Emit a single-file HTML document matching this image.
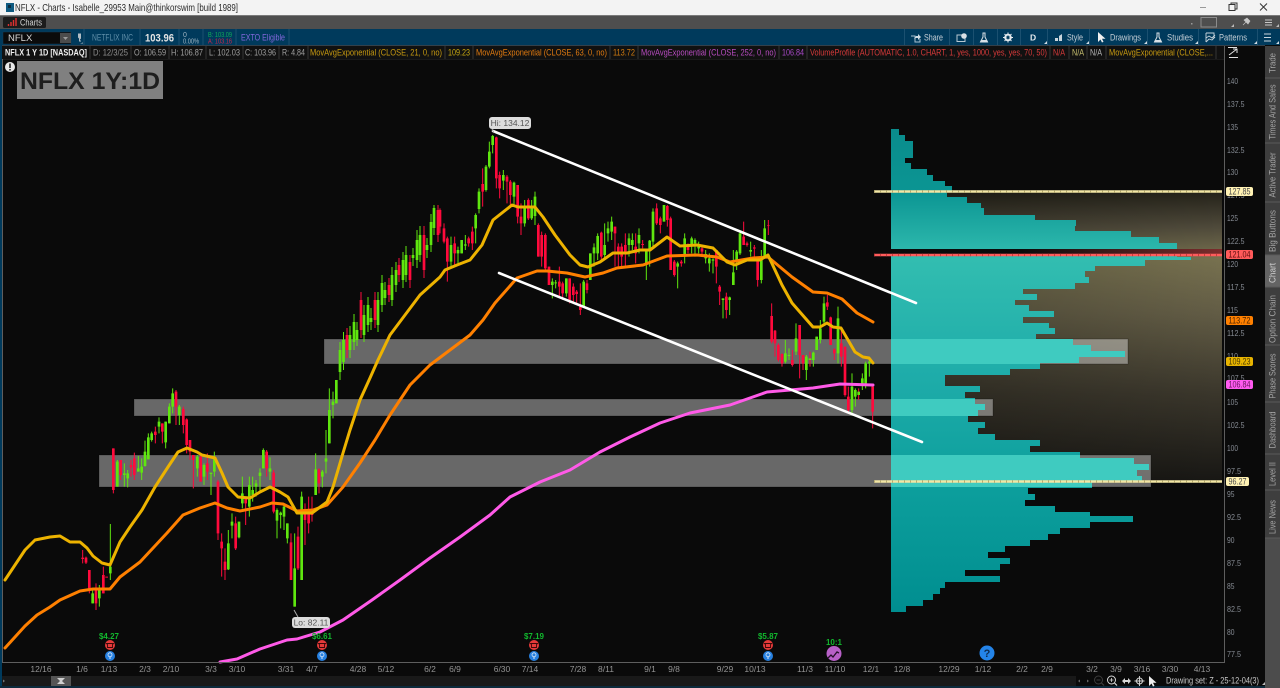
<!DOCTYPE html>
<html>
<head>
<meta charset="utf-8">
<title>NFLX - Charts</title>
<style>
html,body{margin:0;padding:0;background:#0a0a0a;width:1280px;height:688px;overflow:hidden}
svg{display:block}
text{font-family:"Liberation Sans",sans-serif}
.ax{font-size:8.6px;fill:#858a92}
.dt{font-size:8.5px;fill:#949494;text-anchor:middle}
.st{font-size:9.4px}
.tb{font-size:9.6px;fill:#c4ced6}
.tab{font-size:9.4px;fill:#a4a4a4;text-anchor:middle}
.ev{font-size:8px;fill:#12b82e;text-anchor:middle;font-weight:bold}
.bd{font-size:8.8px;fill:#4a4a4a}
</style>
</head>
<body>
<svg width="1280" height="688" viewBox="0 0 1280 688" xmlns="http://www.w3.org/2000/svg">
<defs>
<linearGradient id="vp" gradientUnits="userSpaceOnUse" x1="0" y1="129" x2="0" y2="612">
<stop offset="0" stop-color="#0a8c8c"/><stop offset=".13" stop-color="#0b9593"/><stop offset=".27" stop-color="#32bdb0"/><stop offset=".5" stop-color="#1fadaa"/><stop offset=".75" stop-color="#0c9e9c"/><stop offset="1" stop-color="#008e90"/>
</linearGradient>
<linearGradient id="tan" gradientUnits="userSpaceOnUse" x1="0" y1="192" x2="0" y2="481">
<stop offset="0" stop-color="#242219"/><stop offset=".12" stop-color="#4e493a"/><stop offset=".23" stop-color="#77714f"/><stop offset=".42" stop-color="#625c45"/><stop offset=".7" stop-color="#3a362b"/><stop offset="1" stop-color="#181714"/>
</linearGradient>
<linearGradient id="tanl" gradientUnits="userSpaceOnUse" x1="891" y1="0" x2="1222" y2="0">
<stop offset="0" stop-color="#000" stop-opacity=".25"/><stop offset="1" stop-color="#000" stop-opacity="0"/>
</linearGradient>
<linearGradient id="band" gradientUnits="userSpaceOnUse" x1="1020" y1="0" x2="1222" y2="0">
<stop offset="0" stop-color="#0a0a0a"/><stop offset="1" stop-color="#7c2c2c"/>
</linearGradient>
<clipPath id="pc"><path d="M891 129H899V135H905V141H913V158H905V163H911V169H927V175H933V181H945V186H952V192H947V197H967V203H981V208H984V215H1035V220H1076V226H1075V231H1131V237H1159V243H1177V257H1191V260H1145V266H1095V271H1085V277H1089V283H1075V289H1023V294H1037V300H1015V305H1029V311H1054V317H1023V323H1049V328H1055V334H1036V339H1073V345H1091V351H1125V357H1079V363H1040V369H1010V375H945V386H980V392H965V398H975V404H985V410H978V416H968V422H985V428H978V434H995V440H1040V446H1030V452H1080V458H1134V464H1149V470H1137V476H1142V482H1092V488H1028V494H1035V500H1025V506H1055V512H1090V516H1133V522H1090V528H1060V534H1048V540H1030V546H1005V552H988V558H1010V564H1000V570H965V576H1000V582H945V588H940V594H933V600H923V606H906V612H891Z"/></clipPath>
</defs>

<!-- base -->
<rect width="1280" height="688" fill="#0a0a0a"/>
<rect x="0" y="0" width="1280" height="15" fill="#f3f3f3"/>
<rect x="0" y="15" width="1280" height="14" fill="#4e4e4e"/>
<rect x="0" y="15" width="1280" height="1" fill="#7a7a7a"/>
<rect x="0" y="29" width="1280" height="16" fill="#003a5c"/>
<rect x="0" y="45" width="2" height="643" fill="#003a5c"/>

<!-- title bar -->
<rect x="6" y="3" width="8" height="9" fill="#0f5a80"/>
<rect x="8" y="5" width="3" height="3" fill="#0c2c40"/>
<text x="15" y="11" font-size="10.400" fill="#2a2a2a" textLength="223" lengthAdjust="spacingAndGlyphs">NFLX - Charts - Isabelle_29953 Main@thinkorswim [build 1989]</text>
<path d="M1200 7.500H1206" stroke="#999" stroke-width="1"/>
<path d="M1229 4.500h6v6h-6zM1231 4.500v-1.500h6v6h-2" fill="none" stroke="#333" stroke-width="1"/>
<path d="M1260 3.500l7 7M1267 3.500l-7 7" stroke="#333" stroke-width="1"/>

<!-- tabs row -->
<rect x="3" y="17" width="43" height="11" rx="1.500" fill="#1c1c1c"/>
<path d="M8.500 26v-2M11 26v-4M13.500 26v-6M16 26v-8" stroke="#e03030" stroke-width="1.400"/>
<text x="20" y="25.500" font-size="9.600" fill="#d6d6d6" textLength="22" lengthAdjust="spacingAndGlyphs">Charts</text>
<rect x="1191" y="23" width="1.500" height="1.500" fill="#999"/>
<rect x="1201" y="17.500" width="15.500" height="9.500" fill="none" stroke="#8c8c8c" stroke-width="1"/>
<path d="M1243 25l3-3M1244 20l4 4 2-3-3-3z" fill="#c8c8c8" stroke="#c8c8c8" stroke-width=".6"/>
<path d="M1265 20h7M1265 22.500h7M1265 25h7" stroke="#c8c8c8" stroke-width="1"/>
<path d="M1231 27h3v-3zM1276 27h3v-3zM1225 27h1" fill="#bbb"/>

<!-- blue toolbar left -->
<rect x="3" y="32" width="68" height="12" fill="#0b0b0b" stroke="#1a3a50" stroke-width=".5"/>
<text x="8" y="41" font-size="9.500" fill="#d8d8d8">NFLX</text>
<rect x="60" y="33" width="11" height="10" fill="#4c4c4c"/>
<path d="M63 37h5l-2.500 3z" fill="#9a9a9a"/>
<path d="M78 33.500h3v5l-1 1v1h1v1h-2v-3l-1-1zM80 43.500h3v-1z" fill="#b0bcc4"/>
<text x="92" y="40.500" font-size="9.600" fill="#5f8ea8" textLength="41" lengthAdjust="spacingAndGlyphs">NETFLIX INC</text>
<text x="145" y="41.500" font-size="11" font-weight="bold" fill="#e4e4e4" textLength="29" lengthAdjust="spacingAndGlyphs">103.96</text>
<text x="183" y="37" font-size="7" fill="#9db3c1">0</text>
<text x="183" y="43.500" font-size="7" fill="#9db3c1" textLength="16" lengthAdjust="spacingAndGlyphs">0.00%</text>
<text x="208" y="37" font-size="7" fill="#0fa85a" textLength="24" lengthAdjust="spacingAndGlyphs">B: 103.09</text>
<text x="208" y="43.500" font-size="7" fill="#c8284a" textLength="24" lengthAdjust="spacingAndGlyphs">A: 103.16</text>
<text x="241" y="40.500" font-size="9.600" fill="#8268dc" textLength="44" lengthAdjust="spacingAndGlyphs">EXTO Eligible</text>
<path d="M84 29V45M140 29V45M179 29V45M203 29V45M236 29V45M289 29V45" stroke="#1b5070" stroke-width="1"/>

<!-- blue toolbar right -->
<path d="M904.500 29V45M949.500 29V45M973.500 29V45M997.500 29V45M1020.500 29V45M1047.500 29V45M1089.500 29V45M1147.500 29V45M1198.500 29V45M1257.500 29V45" stroke="#1b5070" stroke-width="1"/>
<path d="M911 36h4v6h5v-3" fill="none" stroke="#a8c0cf" stroke-width="1"/><path d="M914 39l2-3h2v-2l3 3-3 3v-2h-2z" fill="#cfdbe3"/>
<text x="924" y="40.500" class="tb" textLength="19" lengthAdjust="spacingAndGlyphs">Share</text>
<rect x="957" y="35" width="8" height="6.500" fill="none" stroke="#b8c8d2" stroke-width="1"/><circle cx="964" cy="36" r="2.800" fill="#d8e0e6"/>
<path d="M982.500 33h3M983 33v4l-2.500 5h7l-2.500-5v-4" fill="none" stroke="#d8e0e6" stroke-width="1"/><path d="M981 40h6l1 2h-8z" fill="#d8e0e6"/>
<circle cx="1008" cy="37.500" r="3" fill="none" stroke="#e4eaee" stroke-width="1.600"/><path d="M1008 32.500v10M1003 37.500h10M1004.500 34l7 7M1011.500 34l-7 7" stroke="#e4eaee" stroke-width="1"/><circle cx="1008" cy="37.500" r="1.500" fill="#003a5c"/>
<text x="1030" y="40.500" font-size="8.500" font-weight="bold" fill="#e4eaee">D</text>
<path d="M1055 38h3v3h-3zM1059 36l3-2v7h-3z" fill="#c8d4dc"/>
<text x="1067" y="40.500" class="tb" textLength="16" lengthAdjust="spacingAndGlyphs">Style</text>
<path d="M1098 32v10l2.500-2.500 1.500 3 1.500-.700-1.500-3h3.500z" fill="#f0f0f0"/>
<text x="1110" y="40.500" class="tb" textLength="31" lengthAdjust="spacingAndGlyphs">Drawings</text>
<path d="M1156.500 33h3M1157 33v4l-2.500 5h7l-2.500-5v-4" fill="none" stroke="#d8e0e6" stroke-width="1"/><path d="M1155 40h6l1 2h-8z" fill="#d8e0e6"/>
<text x="1167" y="40.500" class="tb" textLength="26" lengthAdjust="spacingAndGlyphs">Studies</text>
<path d="M1206 33h8v5M1206 33v9M1206 38l3-2 3 2 3-3M1206 42l3-3 3 1 3-3" fill="none" stroke="#c8d4dc" stroke-width=".9"/>
<text x="1219" y="40.500" class="tb" textLength="28" lengthAdjust="spacingAndGlyphs">Patterns</text>
<path d="M1264 34h7M1264 37.500h7M1264 41h7" stroke="#c8d4dc" stroke-width="1"/>
<path d="M1044 44h3v-3zM1086 44h3v-3zM1144 44h3v-3zM1195 44h3v-3zM1254 44h3v-3zM1276 44h3v-3z" fill="#cfdbe3"/>

<!-- status row -->
<rect x="2" y="45" width="1222" height="14.500" fill="#111111"/>
<rect x="2" y="45" width="1263" height="1" fill="#33404a"/>
<rect x="2" y="59" width="1222" height=".8" fill="#1f1f1f"/>
<path d="M90 46V59M131 46V59M169 46V59M206 46V59M243 46V59M279 46V59M308 46V59M445 46V59M473 46V59M610 46V59M638 46V59M779 46V59M807 46V59M1050 46V59M1069 46V59M1087 46V59M1106 46V59M1216 46V59" stroke="#3a3a3a" stroke-width=".9"/>
<text x="5" y="55.500" class="st" font-weight="bold" fill="#f0f0f0" textLength="82" lengthAdjust="spacingAndGlyphs">NFLX 1 Y 1D [NASDAQ]</text>
<text x="93" y="55.500" class="st" fill="#8e8e8e" textLength="35" lengthAdjust="spacingAndGlyphs">D: 12/3/25</text>
<text x="134" y="55.500" class="st" fill="#a0a0a0" textLength="32" lengthAdjust="spacingAndGlyphs">O: 106.59</text>
<text x="171" y="55.500" class="st" fill="#a0a0a0" textLength="32" lengthAdjust="spacingAndGlyphs">H: 106.87</text>
<text x="209" y="55.500" class="st" fill="#a0a0a0" textLength="31" lengthAdjust="spacingAndGlyphs">L: 102.03</text>
<text x="245" y="55.500" class="st" fill="#a0a0a0" textLength="31" lengthAdjust="spacingAndGlyphs">C: 103.96</text>
<text x="282" y="55.500" class="st" fill="#a0a0a0" textLength="23" lengthAdjust="spacingAndGlyphs">R: 4.84</text>
<text x="310" y="55.500" class="st" fill="#c89a10" textLength="132" lengthAdjust="spacingAndGlyphs">MovAvgExponential (CLOSE, 21, 0, no)</text>
<text x="448" y="55.500" class="st" fill="#c8a810" textLength="22" lengthAdjust="spacingAndGlyphs">109.23</text>
<text x="476" y="55.500" class="st" fill="#e07a10" textLength="131" lengthAdjust="spacingAndGlyphs">MovAvgExponential (CLOSE, 63, 0, no)</text>
<text x="613" y="55.500" class="st" fill="#d07a10" textLength="22" lengthAdjust="spacingAndGlyphs">113.72</text>
<text x="641" y="55.500" class="st" fill="#b84cc0" textLength="135" lengthAdjust="spacingAndGlyphs">MovAvgExponential (CLOSE, 252, 0, no)</text>
<text x="782" y="55.500" class="st" fill="#a848c8" textLength="22" lengthAdjust="spacingAndGlyphs">106.84</text>
<text x="810" y="55.500" class="st" fill="#d83a3a" textLength="237" lengthAdjust="spacingAndGlyphs">VolumeProfile (AUTOMATIC, 1.0, CHART, 1, yes, 1000, yes, yes, 70, 50)</text>
<text x="1053" y="55.500" class="st" fill="#d83a3a" textLength="12" lengthAdjust="spacingAndGlyphs">N/A</text>
<text x="1072" y="55.500" class="st" fill="#c8c070" textLength="12" lengthAdjust="spacingAndGlyphs">N/A</text>
<text x="1090" y="55.500" class="st" fill="#b8b8b8" textLength="12" lengthAdjust="spacingAndGlyphs">N/A</text>
<text x="1109" y="55.500" class="st" fill="#c89a10" textLength="104" lengthAdjust="spacingAndGlyphs">MovAvgExponential (CLOSE,...</text>

<!-- value area and profile -->
<rect x="891" y="192" width="331" height="289" fill="url(#tan)"/>
<rect x="891" y="192" width="331" height="289" fill="url(#tanl)"/>
<rect x="134" y="399" width="859" height="17" fill="#fff" fill-opacity=".385"/>
<rect x="324" y="339" width="804" height="25" fill="#fff" fill-opacity=".385"/>
<rect x="99" y="455" width="1052" height="32" fill="#fff" fill-opacity=".385"/>
<rect x="134" y="399" width="859" height="17" fill="none" stroke="#000" stroke-opacity=".25"/>
<rect x="324" y="339" width="804" height="25" fill="none" stroke="#000" stroke-opacity=".25"/>
<rect x="99" y="455" width="1052" height="32" fill="none" stroke="#000" stroke-opacity=".25"/>
<rect x="891" y="129" width="331" height="483" fill="url(#vp)" clip-path="url(#pc)"/>
<g clip-path="url(#pc)" fill="#3fcbc0">
<rect x="891" y="339" width="237" height="25"/><rect x="891" y="399" width="102" height="17"/><rect x="891" y="455" width="260" height="32"/>
</g>

<!-- levels -->
<rect x="891" y="249" width="331" height="5" fill="url(#band)"/>
<path d="M874 191.500H1222M874 481.500H1222" stroke="#f2e6a4" stroke-width="2.600"/>
<path d="M874 191.500H1222M874 481.500H1222" stroke="#b8ac70" stroke-width="2.600" stroke-dasharray="1 5"/>
<path d="M874 255H1222" stroke="#ff5c5c" stroke-width="2.600"/>
<path d="M874 255H1222" stroke="#c83c3c" stroke-width="2.600" stroke-dasharray="1 5"/>

<!-- candles: first section -->
<g transform="translate(80 380) scale(.33333)" fill="none">
<path stroke="#ff0a3c" stroke-width="3" d="M8 510V550M18 530V552M28 570V640M48 610V690M70 560V640M100 205V340M122 240V300M153 240V290M163 218V300M226 140V190M247 130V190M288 30V135M310 80V160M320 115V220M330 180V240M340 225V325M362 225V305M382 220V300M414 300V480M425 460V590M435 505V600M467 410V510M497 350V435M560 210V290M581 270V400M633 460V600M654 440V570M675 370V495M686 350V460M696 350V425M717 265V340"/>
<path stroke="#ff0a3c" stroke-width="8" d="M8 533V537M18 533V548M28 570V625M48 625V670M70 585V640M80 590V593M100 205V330M122 240V285M153 255V262M163 235V285M226 155V165M247 130V155M288 35V80M310 87V135M320 118V195M330 180V215M340 225V240M362 230V305M382 250V275M414 305V460M425 485V505M435 545V570M467 430V505M497 350V370M560 215V265M581 278V395M633 487V600M654 470V565M675 390V420M686 395V430M696 395V405M717 268V310"/>
<path stroke="#5fe60f" stroke-width="3" d="M38 630V670M58 615V680M91 432V600M112 240V320M133 250V320M143 270V322M175 228V275M185 235V300M195 182V260M205 160V238M215 155V185M237 112V160M257 125V205M268 70V130M278 25V100M298 75V135M352 225V290M372 250V315M393 280V345M403 215V290M445 450V570M456 400V475M477 425V475M487 290V385M508 290V410M518 290V365M528 300V350M540 265V340M550 205V265M570 232V300M591 385V475M602 395V445M612 375V450M622 430V490M644 460V680M665 335V600M707 220V345M727 270V322M738 150V280M748 25V190M759 35V115M769 0V70"/>
<path stroke="#5fe60f" stroke-width="8" d="M38 640V670M58 625V655M91 560V580M112 245V320M133 280V285M143 280V295M175 265V275M185 260V278M195 215V258M205 172V238M215 160V180M237 125V140M257 125V187M268 80V130M278 40V80M298 80V105M352 230V265M372 255V290M393 278V282M403 235V275M445 490V568M456 425V437M477 425V472M487 340V370M508 315V380M518 330V345M528 310V320M540 278V288M550 210V265M570 265V275M591 390V422M602 398V405M612 380V410M622 430V475M644 565V680M665 350V600M707 268V345M727 275V290M738 235V245M748 90V190M759 65V75M769 0V70"/>
</g>
<!-- candles: mid section -->
<g fill="none">
<path stroke="#5fe60f" stroke-width="1" d="M340 342V380M343.500 332V370M350 326V358M354 314V350M357 322V346M364 305V342M368 297V332M371 308V330M378 292V332M382 275V312M385 282V305M392 267V306M396 262V292M403 252V288M406 246V282M413 248V266M417 230V268M420 226V262M427 238V258M431 214V252M434 205V235"/>
<path stroke="#5fe60f" stroke-width="2.700" d="M340 350V372M343.500 340V362M350 335V350M354 322V342M357 330V340M364 315V335M368 305V325M371 318V322M378 300V325M382 283V305M385 290V298M392 275V300M396 270V285M403 260V280M406 255V275M413 255V258M417 240V260M420 235V255M427 245V250M431 222V245M434 208V228"/>
<path stroke="#ff0a3c" stroke-width="1" d="M347 328V358M361 292V338M375 292V328M389 278V302M399 258V282M410 255V288M424 226V278M438 205V242"/>
<path stroke="#ff0a3c" stroke-width="2.700" d="M347 335V350M361 300V330M375 300V320M389 285V295M399 265V275M410 262V280M424 235V270M438 210V235"/>
</g>
<!-- candles: main section -->
<g transform="translate(440 110) scale(.33333)" fill="none">
<path stroke="#ff0a3c" stroke-width="3" d="M0 295V370M12 340V400M22 380V515M44 380V465M86 380V410M97 350V420M128 175V290M169 80V235M179 185V265M201 195V280M211 210V285M233 225V340M243 280V375M265 265V330M295 340V440M305 365V470M316 370V480M327 470V525M358 470V560M368 515V570M389 505V580M400 520V580M410 540V585M421 520V615M441 510V550M484 365V450M525 350V470M535 400V470M545 400V470M556 370V470M587 370V460M608 390V415M650 280V345M661 320V370M682 285V350M692 320V480M703 450V500M724 450V470M744 400V430M786 405V440M829 420V520M839 525V585M859 548V625M911 335V400M921 395V410M943 405V450M953 440V530M985 330V375"/>
<path stroke="#ff0a3c" stroke-width="8" d="M0 300V350M12 355V395M22 385V455M44 400V430M86 385V400M97 365V400M128 222V245M169 82V205M179 195V235M201 200V215M211 215V255M233 225V320M243 320V340M265 270V325M295 345V440M305 375V440M316 375V475M327 470V525M358 515V530M368 520V550M389 505V570M400 530V555M410 545V552M421 590V600M441 520V540M484 368V440M525 350V370M535 410V430M545 410V440M556 405V430M587 410V430M608 402V405M650 295V340M661 325V345M682 288V330M692 325V480M703 455V495M724 455V460M744 410V420M786 415V425M829 420V470M839 530V545M859 560V600M911 380V405M921 400V405M943 412V416M953 445V510M985 345V347"/>
<path stroke="#5fe60f" stroke-width="3" d="M33 380V475M54 410V460M65 390V430M76 375V420M107 310V400M117 235V310M138 165V245M148 95V175M158 75V130M190 180V240M222 215V285M254 270V350M275 270V330M285 245V345M337 505V565M347 510V535M379 505V560M431 510V590M451 430V510M462 400V470M473 370V450M494 340V450M504 335V395M515 320V390M567 370V440M577 370V420M597 355V430M619 420V510M629 390V470M639 295V410M672 285V335M713 455V535M734 370V460M755 380V430M765 385V440M776 395V430M797 420V460M808 430V485M819 445V490M849 565V625M869 560V615M880 420V525M890 420V480M900 360V435M932 395V440M964 420V520M974 330V440"/>
<path stroke="#5fe60f" stroke-width="8" d="M33 405V455M54 420V430M65 390V430M76 403V407M107 315V355M117 245V297M138 170V240M148 125V170M158 78V105M190 195V212M222 218V260M254 290V340M275 295V325M285 260V318M337 515V525M347 517V520M379 505V550M431 515V590M451 430V510M462 412V430M473 378V430M494 405V435M504 355V370M515 335V365M567 385V405M577 390V405M597 375V400M619 420V460M629 392V420M639 305V395M672 285V335M713 460V470M734 385V440M755 385V405M765 390V400M776 405V415M797 432V445M808 445V460M819 448V452M849 565V570M869 562V570M880 487V525M890 425V450M900 370V430M932 420V425M964 440V510M974 355V440"/>
</g>
<!-- candles: last section -->
<g transform="translate(730 210) scale(.33333)" fill="none">
<path stroke="#ff0a3c" stroke-width="3" d="M125 280V400M135 360V440M145 400V455M156 430V470M187 420V470M209 345V505M219 435V480M240 425V470M292 255V300M302 320V405M313 415V450M334 350V470M345 410V560M355 530V610M386 535V570M428 525V655"/>
<path stroke="#ff0a3c" stroke-width="8" d="M125 318V395M135 362V400M145 405V450M156 432V460M187 450V465M209 345V435M219 435V460M292 277V290M302 322V405M313 418V430M334 400V440M345 410V555M355 560V600M428 530V605"/>
<path stroke="#5fe60f" stroke-width="3" d="M166 390V460M177 415V450M198 340V435M229 435V510M250 425V470M260 380V420M271 330V400M282 260V340M324 290V460M366 490V610M376 535V590M397 490V540M407 455V535M418 450V500"/>
<path stroke="#5fe60f" stroke-width="8" d="M166 430V455M177 435V438M198 385V425M229 440V480M240 445V450M250 428V450M260 380V420M271 355V390M282 280V335M324 325V430M366 530V600M376 540V560M386 545V555M397 505V525M407 460V520M418 455V460"/>
</g>

<!-- EMAs -->
<g fill="none" stroke-linejoin="round" stroke-linecap="round">
<path stroke="#ff5ae8" stroke-width="3" d="M220 662L237 659L260 649L287 640L297 639L320 632L343 620L372 600L400 580L430 558L460 537L490 515L510 497L540 482L570 470L600 452L630 437L660 423L690 413L730 405L767 392L790 390L813 388L840 384L873 385"/>
<path stroke="#ff8000" stroke-width="3" d="M5 648L25 626L37 615L50 607L60 600L80 591L93 589L110 589L120 577L140 562L167 533L183 515L200 508L215 503L227 508L240 511L260 507L272 503L283 504L297 511L313 510L327 505L343 487L360 463L375 440L390 415L410 385L430 365L450 350L470 335L483 320L495 303L517 278L537 271L547 271L567 273L585 277L603 273L617 268L643 265L667 256L697 255L717 257L730 262L753 258L768 257L792 277L813 292L827 293L842 299L857 313L873 322"/>
<path stroke="#edb300" stroke-width="3" d="M5 580L15 565L25 550L35 540L50 537L60 536L70 542L80 542L87 548L93 556L102 563L110 565L120 542L130 527L142 510L155 487L168 467L178 452L187 448L197 452L202 455L215 458L222 473L228 487L238 497L250 498L260 492L270 487L280 492L288 497L297 513L312 513L327 502L333 487L343 453L350 430L360 400L370 378L378 360L390 335L405 315L420 295L440 277L445 270L457 265L470 260L482 245L493 220L512 205L518 207L535 207L543 217L555 235L570 255L580 265L588 267L600 262L613 253L627 253L640 250L650 250L667 237L680 246L697 245L713 248L727 262L735 265L747 260L760 260L768 255L782 285L792 303L813 327L820 327L827 323L833 327L841 328L855 352L863 357L869 358L873 363"/>
</g>

<!-- trend lines -->
<path d="M493 131L916 303M499 273L922 442" stroke="#fff" stroke-width="2.600" stroke-linecap="round" fill="none"/>

<!-- Hi / Lo -->
<path d="M494 133l-2-4" stroke="#aaa" stroke-width="1"/>
<rect x="489" y="117" width="42" height="12" rx="3" fill="#dcdcdc"/>
<text x="510" y="126" font-size="8.500" fill="#555" text-anchor="middle">Hi: 134.12</text>
<path d="M294 610l4 7" stroke="#aaa" stroke-width="1"/>
<rect x="292" y="617" width="38" height="11" rx="3" fill="#dcdcdc"/>
<text x="311" y="625.500" font-size="8.500" fill="#555" text-anchor="middle">Lo: 82.11</text>

<!-- Title label -->
<rect x="17" y="61" width="146" height="38" fill="#808080"/>
<text x="20" y="89" font-size="24.500" font-weight="bold" fill="#1e1e1e" textLength="140" lengthAdjust="spacingAndGlyphs">NFLX 1Y:1D</text>
<circle cx="10" cy="67" r="5" fill="#e8e8e8"/>
<path d="M10 63.500v4.500" stroke="#222" stroke-width="1.600"/><circle cx="10" cy="69.800" r=".9" fill="#222"/>

<!-- events -->
<g>
<text x="109" y="639" class="ev">$4.27</text>
<text x="322" y="639" class="ev">$6.61</text>
<text x="534" y="639" class="ev">$7.19</text>
<text x="768" y="639" class="ev">$5.87</text>
<text x="834" y="645" class="ev">10:1</text>
<circle cx="110" cy="645" r="5" fill="#e63a3a"/><path d="M106.500 643.500h7l-1 1v3h-5v-3z" fill="none" stroke="#3a0a0a" stroke-width=".9"/>
<circle cx="110" cy="656" r="5" fill="#2680e0"/><circle cx="110" cy="654.800" r="2" fill="none" stroke="#dbe9f8" stroke-width=".8"/><path d="M110 656.500v2.500" stroke="#dbe9f8" stroke-width="1"/>
<circle cx="322" cy="645" r="5" fill="#e63a3a"/><path d="M318.500 643.500h7l-1 1v3h-5v-3z" fill="none" stroke="#3a0a0a" stroke-width=".9"/>
<circle cx="322" cy="656" r="5" fill="#2680e0"/><circle cx="322" cy="654.800" r="2" fill="none" stroke="#dbe9f8" stroke-width=".8"/><path d="M322 656.500v2.500" stroke="#dbe9f8" stroke-width="1"/>
<circle cx="534" cy="645" r="5" fill="#e63a3a"/><path d="M530.500 643.500h7l-1 1v3h-5v-3z" fill="none" stroke="#3a0a0a" stroke-width=".9"/>
<circle cx="534" cy="656" r="5" fill="#2680e0"/><circle cx="534" cy="654.800" r="2" fill="none" stroke="#dbe9f8" stroke-width=".8"/><path d="M534 656.500v2.500" stroke="#dbe9f8" stroke-width="1"/>
<circle cx="768" cy="645" r="5" fill="#e63a3a"/><path d="M764.500 643.500h7l-1 1v3h-5v-3z" fill="none" stroke="#3a0a0a" stroke-width=".9"/>
<circle cx="768" cy="656" r="5" fill="#2680e0"/><circle cx="768" cy="654.800" r="2" fill="none" stroke="#dbe9f8" stroke-width=".8"/><path d="M768 656.500v2.500" stroke="#dbe9f8" stroke-width="1"/>
<circle cx="834" cy="653.500" r="7.500" fill="#b860c8"/><path d="M828 658l3-3 2 2 4-5 2 1" fill="none" stroke="#24102a" stroke-width="1.300"/>
<circle cx="987" cy="653" r="7.500" fill="#2484e8"/>
<text x="987" y="657" font-size="11" font-weight="bold" fill="#0d2c50" text-anchor="middle">?</text>
</g>

<!-- chart frame -->
<path d="M2.500 59V662.500H1224.500V46" fill="none" stroke="#5e5e5e" stroke-width="1"/>
<path d="M1228 47.500h9M1229 57.500h9M1229 55l8-6M1233 49h4v4" fill="none" stroke="#e0e0e0" stroke-width="1"/>

<!-- price axis -->
<text x="1227" y="84" class="ax" textLength="11" lengthAdjust="spacingAndGlyphs">140</text>
<text x="1227" y="107" class="ax" textLength="17.500" lengthAdjust="spacingAndGlyphs">137.5</text>
<text x="1227" y="130" class="ax" textLength="11" lengthAdjust="spacingAndGlyphs">135</text>
<text x="1227" y="153" class="ax" textLength="17.500" lengthAdjust="spacingAndGlyphs">132.5</text>
<text x="1227" y="175" class="ax" textLength="11" lengthAdjust="spacingAndGlyphs">130</text>
<text x="1227" y="198" class="ax" textLength="17.500" lengthAdjust="spacingAndGlyphs">127.5</text>
<text x="1227" y="221" class="ax" textLength="11" lengthAdjust="spacingAndGlyphs">125</text>
<text x="1227" y="244" class="ax" textLength="17.500" lengthAdjust="spacingAndGlyphs">122.5</text>
<text x="1227" y="267" class="ax" textLength="11" lengthAdjust="spacingAndGlyphs">120</text>
<text x="1227" y="290" class="ax" textLength="17.500" lengthAdjust="spacingAndGlyphs">117.5</text>
<text x="1227" y="313" class="ax" textLength="11" lengthAdjust="spacingAndGlyphs">115</text>
<text x="1227" y="336" class="ax" textLength="17.500" lengthAdjust="spacingAndGlyphs">112.5</text>
<text x="1227" y="359" class="ax" textLength="11" lengthAdjust="spacingAndGlyphs">110</text>
<text x="1227" y="381" class="ax" textLength="17.500" lengthAdjust="spacingAndGlyphs">107.5</text>
<text x="1227" y="405" class="ax" textLength="11" lengthAdjust="spacingAndGlyphs">105</text>
<text x="1227" y="428" class="ax" textLength="17.500" lengthAdjust="spacingAndGlyphs">102.5</text>
<text x="1227" y="451" class="ax" textLength="11" lengthAdjust="spacingAndGlyphs">100</text>
<text x="1227" y="474" class="ax" textLength="14" lengthAdjust="spacingAndGlyphs">97.5</text>
<text x="1227" y="497" class="ax" textLength="7.500" lengthAdjust="spacingAndGlyphs">95</text>
<text x="1227" y="520" class="ax" textLength="14" lengthAdjust="spacingAndGlyphs">92.5</text>
<text x="1227" y="543" class="ax" textLength="7.500" lengthAdjust="spacingAndGlyphs">90</text>
<text x="1227" y="566" class="ax" textLength="14" lengthAdjust="spacingAndGlyphs">87.5</text>
<text x="1227" y="589" class="ax" textLength="7.500" lengthAdjust="spacingAndGlyphs">85</text>
<text x="1227" y="612" class="ax" textLength="14" lengthAdjust="spacingAndGlyphs">82.5</text>
<text x="1227" y="635" class="ax" textLength="7.500" lengthAdjust="spacingAndGlyphs">80</text>
<text x="1227" y="657" class="ax" textLength="14" lengthAdjust="spacingAndGlyphs">77.5</text>

<rect x="1226" y="187" width="27" height="9" rx="2" fill="#fff2b4"/><text x="1228.500" y="194.600" class="bd" textLength="22" lengthAdjust="spacingAndGlyphs">127.85</text>
<rect x="1226" y="250" width="27" height="9" rx="2" fill="#ff5a5a"/><text x="1228.500" y="257.600" class="bd" style="fill:#601010" textLength="22" lengthAdjust="spacingAndGlyphs">121.04</text>
<rect x="1226" y="316" width="27" height="9" rx="2" fill="#ff8000"/><text x="1228.500" y="323.600" class="bd" style="fill:#4a2400" textLength="22" lengthAdjust="spacingAndGlyphs">113.72</text>
<rect x="1226" y="357" width="27" height="9" rx="2" fill="#e8b400"/><text x="1228.500" y="364.600" class="bd" style="fill:#4a3a00" textLength="22" lengthAdjust="spacingAndGlyphs">109.23</text>
<rect x="1226" y="380" width="27" height="9" rx="2" fill="#ff5af0"/><text x="1228.500" y="387.600" class="bd" style="fill:#6a1a60" textLength="22" lengthAdjust="spacingAndGlyphs">106.84</text>
<rect x="1226" y="477" width="23" height="9" rx="2" fill="#fff2b4"/><text x="1228.500" y="484.600" class="bd" textLength="18" lengthAdjust="spacingAndGlyphs">96.27</text>

<!-- date axis -->
<text x="41" y="672" class="dt">12/16</text><text x="82" y="672" class="dt">1/6</text><text x="109" y="672" class="dt">1/13</text><text x="145" y="672" class="dt">2/3</text><text x="171" y="672" class="dt">2/10</text><text x="211" y="672" class="dt">3/3</text><text x="237" y="672" class="dt">3/10</text><text x="286" y="672" class="dt">3/31</text><text x="312" y="672" class="dt">4/7</text><text x="358" y="672" class="dt">4/28</text><text x="386" y="672" class="dt">5/12</text><text x="430" y="672" class="dt">6/2</text><text x="455" y="672" class="dt">6/9</text><text x="502" y="672" class="dt">6/30</text><text x="530" y="672" class="dt">7/14</text><text x="578" y="672" class="dt">7/28</text><text x="606" y="672" class="dt">8/11</text><text x="650" y="672" class="dt">9/1</text><text x="674" y="672" class="dt">9/8</text><text x="725" y="672" class="dt">9/29</text><text x="755" y="672" class="dt">10/13</text><text x="805" y="672" class="dt">11/3</text><text x="835" y="672" class="dt">11/10</text><text x="871" y="672" class="dt">12/1</text><text x="902" y="672" class="dt">12/8</text><text x="949" y="672" class="dt">12/29</text><text x="983" y="672" class="dt">1/12</text><text x="1022" y="672" class="dt">2/2</text><text x="1047" y="672" class="dt">2/9</text><text x="1092" y="672" class="dt">3/2</text><text x="1116" y="672" class="dt">3/9</text><text x="1142" y="672" class="dt">3/16</text><text x="1170" y="672" class="dt">3/30</text><text x="1202" y="672" class="dt">4/13</text>

<!-- scrollbar -->
<rect x="2" y="676" width="1074" height="10" fill="#191919"/>
<rect x="51" y="676" width="20" height="10" fill="#555"/>
<path d="M57 678h8l-3 3 3 3h-8l3-3z" fill="#cfcfcf"/>
<path d="M5 681l-2-1.500v3z" fill="#777"/>
<rect x="0" y="686" width="1265" height="2" fill="#0c2a3c"/>
<path d="M1080 679.500v3l-2-1.500zM1087 679.500v3l2-1.500z" fill="#666"/>
<circle cx="1098.500" cy="680" r="4" fill="none" stroke="#3c3c3c" stroke-width="1"/><path d="M1101.500 683l2.500 2.500" stroke="#3c3c3c" stroke-width="1.200"/><path d="M1096.500 680h4" stroke="#3c3c3c"/>
<circle cx="1111.500" cy="680" r="4" fill="none" stroke="#d8d8d8" stroke-width="1"/><path d="M1114.500 683l2.500 2.500" stroke="#d8d8d8" stroke-width="1.200"/><path d="M1109.500 680h4M1111.500 678v4" stroke="#d8d8d8" stroke-width=".8"/>
<path d="M1122 681l3-3v6zM1131 681l-3-3v6z" fill="#d8d8d8"/><rect x="1124.500" y="680" width="4" height="2" fill="#d8d8d8"/>
<circle cx="1139.500" cy="681" r="3" fill="none" stroke="#d8d8d8" stroke-width="1"/><path d="M1139.500 676v10M1134.500 681h10" stroke="#d8d8d8" stroke-width=".9"/>
<path d="M1149 676v10l2.500-2.500 1.500 3 1.500-.700-1.500-3h3.500z" fill="#f0f0f0"/>
<text x="1166" y="683.500" font-size="9.400" fill="#c8c8c8" textLength="93" lengthAdjust="spacingAndGlyphs">Drawing set: Z - 25-12-04(3)</text>
<path d="M1262 685h3v-3z" fill="#bbb"/>

<!-- right tabs -->
<rect x="1265" y="46" width="15" height="642" fill="#4c4c4c"/>
<rect x="1265" y="46" width="15" height="492" fill="#3e3e3e"/>
<rect x="1265" y="255" width="15" height="32" fill="#646464"/>
<path d="M1265 78H1280M1265 143H1280M1265 202H1280M1265 255H1280M1265 287H1280M1265 345H1280M1265 402H1280M1265 454H1280M1265 490H1280M1265 538H1280" stroke="#5a5a5a" stroke-width="1"/>
<g>
<text class="tab" transform="translate(1275.500 63) rotate(-90)" textLength="20" lengthAdjust="spacingAndGlyphs">Trade</text>
<text class="tab" transform="translate(1275.500 112) rotate(-90)" textLength="55" lengthAdjust="spacingAndGlyphs">Times And Sales</text>
<text class="tab" transform="translate(1275.500 175) rotate(-90)" textLength="45" lengthAdjust="spacingAndGlyphs">Active Trader</text>
<text class="tab" transform="translate(1275.500 231) rotate(-90)" textLength="42" lengthAdjust="spacingAndGlyphs">Big Buttons</text>
<text class="tab" transform="translate(1275.500 273) rotate(-90)" style="fill:#d0d0d0" textLength="20" lengthAdjust="spacingAndGlyphs">Chart</text>
<text class="tab" transform="translate(1275.500 319) rotate(-90)" textLength="48" lengthAdjust="spacingAndGlyphs">Option Chain</text>
<text class="tab" transform="translate(1275.500 376) rotate(-90)" textLength="45" lengthAdjust="spacingAndGlyphs">Phase Scores</text>
<text class="tab" transform="translate(1275.500 430) rotate(-90)" textLength="37" lengthAdjust="spacingAndGlyphs">Dashboard</text>
<text class="tab" transform="translate(1275.500 474) rotate(-90)" textLength="24" lengthAdjust="spacingAndGlyphs">Level II</text>
<text class="tab" transform="translate(1275.500 517) rotate(-90)" textLength="34" lengthAdjust="spacingAndGlyphs">Live News</text>
</g>
</svg>
</body>
</html>
